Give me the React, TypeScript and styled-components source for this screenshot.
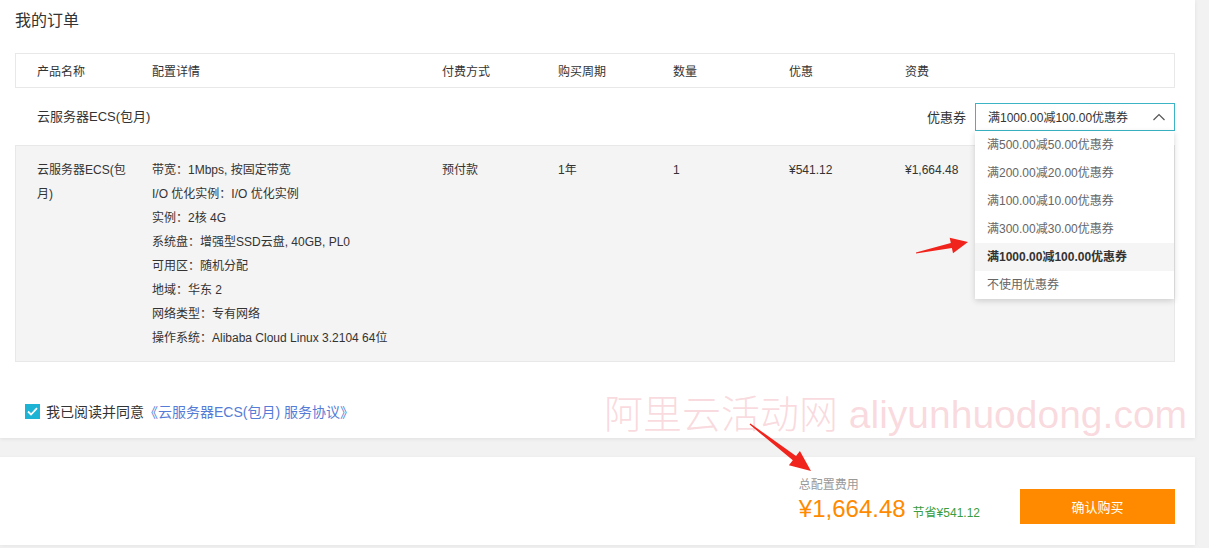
import React from 'react';
import styled, { createGlobalStyle } from 'styled-components';

const GlobalStyle = createGlobalStyle`
  html, body {
    margin: 0;
    padding: 0;
    background: #f2f2f2;
    font-family: "Liberation Sans", "Noto Sans CJK SC", sans-serif;
    color: #333;
  }
`;

const columns = ['产品名称', '配置详情', '付费方式', '购买周期', '数量', '优惠', '资费'];

const specs = [
  '带宽：1Mbps, 按固定带宽',
  'I/O 优化实例：I/O 优化实例',
  '实例：2核 4G',
  '系统盘：增强型SSD云盘, 40GB, PL0',
  '可用区：随机分配',
  '地域：华东 2',
  '网络类型：专有网络',
  '操作系统：Alibaba Cloud Linux 3.2104 64位',
];

const coupons = [
  '满500.00减50.00优惠券',
  '满200.00减20.00优惠券',
  '满100.00减10.00优惠券',
  '满300.00减30.00优惠券',
  '满1000.00减100.00优惠券',
  '不使用优惠券',
];

const selectedCoupon = '满1000.00减100.00优惠券';

// callout arrow: tapered shaft + triangle head, tail -> tip
const arrowPoints = (tx: number, ty: number, hx: number, hy: number, headLen: number, headHalf: number) => {
  const len = Math.hypot(hx - tx, hy - ty);
  const ux = (hx - tx) / len;
  const uy = (hy - ty) / len;
  const nx = -uy;
  const ny = ux;
  const bx = hx - ux * headLen;
  const by = hy - uy * headLen;
  const p = (x: number, y: number) => `${x.toFixed(1)},${y.toFixed(1)}`;
  return [
    p(tx + nx * 0.6, ty + ny * 0.6),
    p(bx + nx * 2.6, by + ny * 2.6),
    p(bx + nx * headHalf, by + ny * headHalf),
    p(hx, hy),
    p(bx - nx * headHalf, by - ny * headHalf),
    p(bx - nx * 2.6, by - ny * 2.6),
    p(tx - nx * 0.6, ty - ny * 0.6),
  ].join(' ');
};

const App = () => {
  return (
    <>
      <GlobalStyle />
      <Page>
        <OrderCard>
          <Title>我的订单</Title>
          <HeaderRow>
            {columns.map((c) => (
              <span key={c}>{c}</span>
            ))}
          </HeaderRow>

          <ProductRow>
            <ProductName>云服务器ECS(包月)</ProductName>
            <CouponPicker>
              <CouponLabel>优惠券</CouponLabel>
              <SelectWrap>
                <SelectBox>
                  <span>{selectedCoupon}</span>
                  <Chevron width="12" height="8" viewBox="0 0 12 8">
                    <polyline points="0.5,7 6,1.5 11.5,7" fill="none" stroke="#555" strokeWidth="1.2" />
                  </Chevron>
                </SelectBox>
                <Dropdown>
                  {coupons.map((c) => (
                    <Option key={c} $active={c === selectedCoupon}>
                      {c}
                    </Option>
                  ))}
                </Dropdown>
              </SelectWrap>
            </CouponPicker>
          </ProductRow>

          <DataBlock>
            <Cell>云服务器ECS(包月)</Cell>
            <Cell>
              {specs.map((s) => (
                <div key={s}>{s}</div>
              ))}
            </Cell>
            <Cell>预付款</Cell>
            <Cell>1年</Cell>
            <Cell>1</Cell>
            <Cell>¥541.12</Cell>
            <Cell>¥1,664.48</Cell>
          </DataBlock>

          <Agreement>
            <CheckBox>
              <svg width="11" height="9" viewBox="0 0 11 9">
                <polyline points="1,4.5 4,7.5 10,1.2" fill="none" stroke="#fff" strokeWidth="1.8" />
              </svg>
            </CheckBox>
            <span>我已阅读并同意</span>
            <AgreementLink>《云服务器ECS(包月) 服务协议》</AgreementLink>
          </Agreement>

          <Watermark>阿里云活动网 aliyunhuodong.com</Watermark>
        </OrderCard>

        <PayBar>
          <Summary>
            <SummaryLabel>总配置费用</SummaryLabel>
            <PriceLine>
              <Price>¥1,664.48</Price>
              <Saving>节省¥541.12</Saving>
            </PriceLine>
          </Summary>
          <BuyButton>确认购买</BuyButton>
        </PayBar>

        <Callouts width="1209" height="548" viewBox="0 0 1209 548">
          <polygon points={arrowPoints(916, 253, 968, 242, 17, 8)} fill="#f0241c" />
          <polygon points={arrowPoints(750, 424, 811, 471, 21, 9)} fill="#f0241c" />
        </Callouts>
      </Page>
    </>
  );
};

const gridColumns = '115px 290px 116px 115px 116px 116px 1fr';

const Page = styled('div')`
  position: relative;
  width: 1195px;
  height: 548px;
  display: flex;
  flex-direction: column;
  gap: 19px;
`;

const OrderCard = styled('div')`
  position: relative;
  box-sizing: border-box;
  height: 438px;
  padding: 0 20px 0 15px;
  background: #fff;
  box-shadow: 0 1px 4px rgba(0, 0, 0, 0.08);
`;

const Title = styled('div')`
  height: 41px;
  line-height: 41px;
  margin-bottom: 12px;
  font-size: 16px;
  color: #333;
`;

const HeaderRow = styled('div')`
  box-sizing: border-box;
  height: 35px;
  display: grid;
  grid-template-columns: ${gridColumns};
  align-items: center;
  padding-left: 21px;
  border: 1px solid #e8e8e8;
  font-size: 12px;
  color: #333;
`;

const ProductRow = styled('div')`
  height: 57px;
  display: flex;
  align-items: center;
  justify-content: space-between;
  padding-left: 22px;
`;

const ProductName = styled('span')`
  margin-top: -3px;
  font-size: 13px;
  color: #333;
`;

const CouponPicker = styled('div')`
  display: flex;
  align-items: center;
  gap: 9px;
`;

const CouponLabel = styled('span')`
  font-size: 13px;
  color: #333;
`;

const SelectWrap = styled('div')`
  position: relative;
`;

const SelectBox = styled('div')`
  box-sizing: border-box;
  width: 200px;
  height: 28px;
  display: flex;
  align-items: center;
  padding: 0 9px 0 12px;
  border: 1px solid #3bb4c6;
  font-size: 12px;
  color: #333;
  background: #fff;
`;

const Chevron = styled('svg')`
  margin-left: auto;
`;

const Dropdown = styled('div')`
  position: absolute;
  top: 100%;
  left: 0;
  z-index: 5;
  width: 199px;
  background: #fff;
  box-shadow: 0 2px 6px rgba(0, 0, 0, 0.16);
`;

const Option = styled('div')<{ $active?: boolean }>`
  height: 28px;
  line-height: 29px;
  padding-left: 12px;
  font-size: 12px;
  color: ${({ $active }) => ($active ? '#333' : '#666')};
  font-weight: ${({ $active }) => ($active ? 'bold' : 'normal')};
  background: ${({ $active }) => ($active ? '#f5f5f5' : '#fff')};
`;

const DataBlock = styled('div')`
  box-sizing: border-box;
  height: 217px;
  display: grid;
  grid-template-columns: ${gridColumns};
  align-items: start;
  padding: 12px 0 0 21px;
  background: #f4f4f4;
  border: 1px solid #e8e8e8;
  font-size: 12px;
  line-height: 24px;
  color: #333;
`;

const Cell = styled('div')`
  padding-right: 13px;
`;

const Agreement = styled('div')`
  display: flex;
  align-items: center;
  padding: 40px 0 0 10px;
  height: 18px;
  font-size: 14px;
  color: #333;
`;

const CheckBox = styled('span')`
  width: 15px;
  height: 15px;
  margin-right: 6px;
  display: flex;
  align-items: center;
  justify-content: center;
  background: #1cb3d4;
`;

const AgreementLink = styled('span')`
  color: #557cd6;
`;

const Watermark = styled('div')`
  position: absolute;
  left: 604px;
  top: 391px;
  font-size: 39px;
  line-height: 48px;
  font-weight: 300;
  white-space: nowrap;
  color: rgba(240, 150, 160, 0.35);
  pointer-events: none;
`;

const PayBar = styled('div')`
  box-sizing: border-box;
  height: 88px;
  display: flex;
  justify-content: flex-end;
  align-items: flex-end;
  gap: 40px;
  padding: 0 20px 21px 0;
  background: #fff;
  box-shadow: 0 1px 4px rgba(0, 0, 0, 0.06);
`;

const Summary = styled('div')`
  display: flex;
  flex-direction: column;
`;

const SummaryLabel = styled('div')`
  font-size: 12px;
  line-height: 18px;
  color: #999;
`;

const PriceLine = styled('div')`
  display: flex;
  align-items: baseline;
  gap: 7px;
`;

const Price = styled('span')`
  font-size: 24px;
  line-height: 30px;
  color: #ff8a00;
`;

const Saving = styled('span')`
  font-size: 12px;
  color: #3a9d40;
`;

const BuyButton = styled('button')`
  width: 155px;
  height: 35px;
  border: none;
  background: #ff8a00;
  color: #fff;
  font-family: inherit;
  font-size: 13px;
  cursor: pointer;
`;

const Callouts = styled('svg')`
  position: absolute;
  left: 0;
  top: 0;
  pointer-events: none;
  z-index: 10;
`;

export default App;
